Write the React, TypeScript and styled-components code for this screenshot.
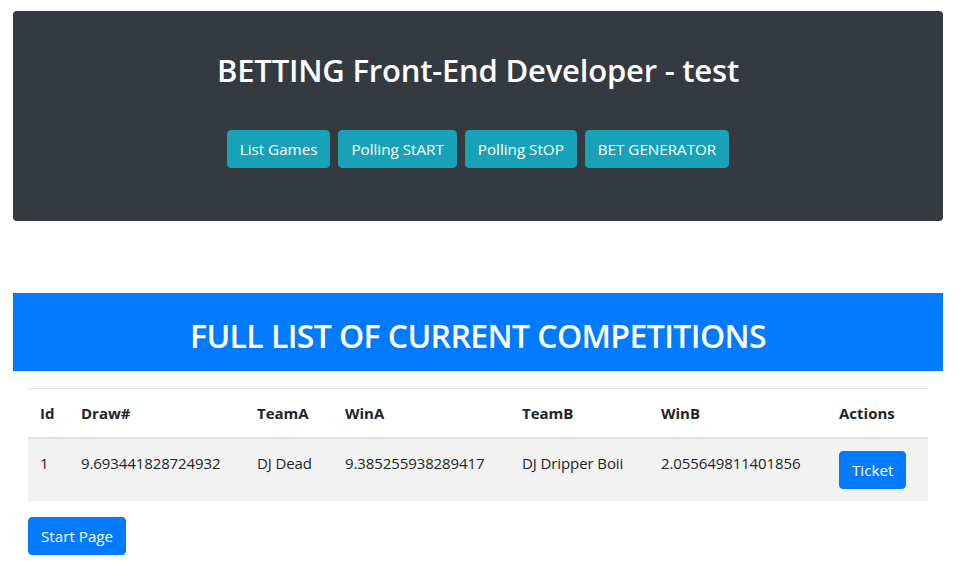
import React from "react";
import styled, { createGlobalStyle } from "styled-components";

const Global = createGlobalStyle`
  html, body { margin: 0; padding: 0; background: #fff; }
  body {
    font-family: "Open Sans", "Noto Sans", sans-serif;
    font-size: 16px;
    line-height: 1.5;
    color: #212529;
  }
  * { box-sizing: border-box; }
`;

const Page = styled.div`
  width: 959px;
  padding: 11px 16px 0 13px;
  display: flex;
  flex-direction: column;
`;

const Jumbotron = styled.section`
  height: 210px;
  background: #343a40;
  border-radius: 4px;
  display: flex;
  flex-direction: column;
  align-items: center;
  padding-top: 38px;
`;

const Title = styled.h1`
  margin: 0;
  color: #fff;
  font-size: 31px;
  font-weight: 600;
  line-height: 42px;
  letter-spacing: -0.2px;
`;

const ButtonRow = styled.div`
  display: flex;
  gap: 8px;
  margin-top: 39px;
`;

const Button = styled.button<{ $variant: "info" | "primary" }>`
  height: 38px;
  padding: 0 12px;
  border: 1px solid ${(p) => (p.$variant === "info" ? "#17a2b8" : "#007bff")};
  background: ${(p) => (p.$variant === "info" ? "#17a2b8" : "#007bff")};
  color: #fff;
  font-family: inherit;
  font-size: 15.2px;
  letter-spacing: 0;
  border-radius: 4px;
  cursor: pointer;
  white-space: nowrap;
`;

const Banner = styled.div`
  margin-top: 72px;
  height: 78px;
  padding-top: 8px;
  background: #007bff;
  display: flex;
  align-items: center;
  justify-content: center;
`;

const BannerTitle = styled.h2`
  margin: 0;
  color: #fff;
  font-size: 32px;
  font-weight: 600;
  letter-spacing: -0.6px;
  line-height: 1.2;
`;

const TableWrap = styled.div`
  padding: 17px 15px 0 15px;
`;

const Table = styled.table`
  width: 900px;
  border-collapse: collapse;
  table-layout: fixed;
`;

const Th = styled.th<{ $w: number }>`
  width: ${(p) => p.$w}px;
  text-align: left;
  font-weight: 700;
  font-size: 15px;
  padding: 12px;
  border-top: 1px solid #dee2e6;
  border-bottom: 2px solid #dee2e6;
  vertical-align: bottom;
  line-height: 24px;
`;

const Row = styled.tr`
  background: #f2f2f2;
`;

const Td = styled.td`
  padding: 12px;
  vertical-align: top;
  font-size: 15px;
  line-height: 24px;
  letter-spacing: -0.1px;
`;

const Footer = styled.div`
  padding: 16px 15px 0 15px;
`;

const columns: [string, number][] = [
  ["Id", 41],
  ["Draw#", 176],
  ["TeamA", 88],
  ["WinA", 177],
  ["TeamB", 139],
  ["WinB", 178],
  ["Actions", 101],
];

export default function App() {
  return (
    <>
      <Global />
      <Page>
        <Jumbotron>
          <Title>BETTING Front-End Developer - test</Title>
          <ButtonRow>
            <Button $variant="info">List Games</Button>
            <Button $variant="info">Polling StART</Button>
            <Button $variant="info">Polling StOP</Button>
            <Button $variant="info">BET GENERATOR</Button>
          </ButtonRow>
        </Jumbotron>
        <Banner>
          <BannerTitle>FULL LIST OF CURRENT COMPETITIONS</BannerTitle>
        </Banner>
        <TableWrap>
          <Table>
            <thead>
              <tr>
                {columns.map(([name, w]) => (
                  <Th key={name} $w={w}>
                    {name}
                  </Th>
                ))}
              </tr>
            </thead>
            <tbody>
              <Row>
                <Td>1</Td>
                <Td>9.693441828724932</Td>
                <Td>DJ Dead</Td>
                <Td>9.385255938289417</Td>
                <Td>DJ Dripper Boii</Td>
                <Td>2.055649811401856</Td>
                <Td>
                  <Button $variant="primary">Ticket</Button>
                </Td>
              </Row>
            </tbody>
          </Table>
        </TableWrap>
        <Footer>
          <Button $variant="primary">Start Page</Button>
        </Footer>
      </Page>
    </>
  );
}
